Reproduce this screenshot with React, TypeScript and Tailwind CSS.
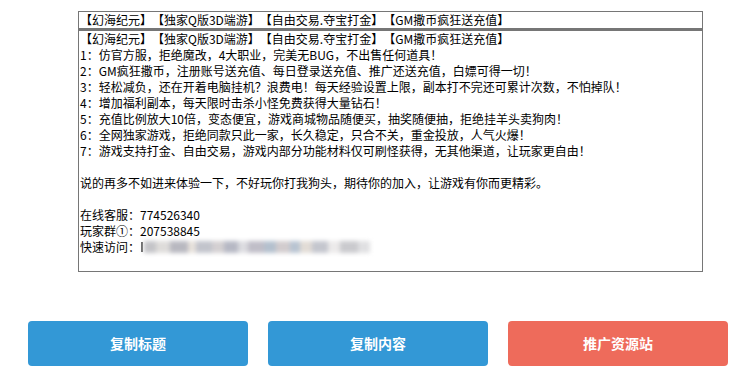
import React from 'react';

const lines = [
  '【幻海纪元】【独家Q版3D端游】【自由交易.夺宝打金】【GM撒币疯狂送充值】',
  '1：仿官方服，拒绝魔改，4大职业，完美无BUG，不出售任何道具！',
  '2：GM疯狂撒币，注册账号送充值、每日登录送充值、推广还送充值，白嫖可得一切！',
  '3：轻松减负，还在开着电脑挂机？浪费电！每天经验设置上限，副本打不完还可累计次数，不怕掉队！',
  '4：增加福利副本，每天限时击杀小怪免费获得大量钻石！',
  '5：充值比例放大10倍，变态便宜，游戏商城物品随便买，抽奖随便抽，拒绝挂羊头卖狗肉！',
  '6：全网独家游戏，拒绝同款只此一家，长久稳定，只合不关，重金投放，人气火爆！',
  '7：游戏支持打金、自由交易，游戏内部分功能材料仅可刷怪获得，无其他渠道，让玩家更自由！',
  '',
  '说的再多不如进来体验一下，不好玩你打我狗头，期待你的加入，让游戏有你而更精彩。',
  '',
  '在线客服：774526340',
  '玩家群①：207538845',
];

// blurred link pieces
const blurBits: { w: number; c: string }[] = [
  { w: 12, c: 'bg-[#c4c4c8]' },
  { w: 14, c: 'bg-[#dedcda]' },
  { w: 18, c: 'bg-[#b8b8c0]' },
  { w: 8, c: 'bg-[#e8e2dc]' },
  { w: 16, c: 'bg-[#c2c4cc]' },
  { w: 12, c: 'bg-[#d4d0d2]' },
  { w: 14, c: 'bg-[#b6b8c4]' },
  { w: 10, c: 'bg-[#dcdce0]' },
  { w: 16, c: 'bg-[#c0bec8]' },
  { w: 12, c: 'bg-[#b4c0ce]' },
  { w: 14, c: 'bg-[#d2ccce]' },
  { w: 10, c: 'bg-[#b8c4d2]' },
  { w: 12, c: 'bg-[#e2dcd6]' },
  { w: 16, c: 'bg-[#c4c6ce]' },
  { w: 12, c: 'bg-[#eceaea]' },
  { w: 18, c: 'bg-[#cacace]' },
  { w: 12, c: 'bg-[#e0e0e2]' },
];

export default function App() {
  return (
    <div
      className="w-[746px] h-[392px] bg-white text-black pt-[11px] [text-spacing-trim:space-all]"
      style={{ fontFamily: '"Noto Sans CJK SC", "Noto Sans", sans-serif' }}
    >
      <div className="ml-[78px] w-[625px]">
        <div className="h-[18px] border border-[#767676] text-[12px] leading-[16px] pl-[1px] whitespace-nowrap overflow-hidden">
          【幻海纪元】【独家Q版3D端游】【自由交易.夺宝打金】【GM撒币疯狂送充值】
        </div>
        <div className="h-[243px] border border-[#767676] border-t-[2px] text-[12px] leading-[16px] pl-[1px] pt-0">
          {lines.map((l, i) => (
            <div key={i} className="h-[16px] whitespace-nowrap">
              {l}
            </div>
          ))}
          <div className="h-[16px] whitespace-nowrap flex items-center">
            <span>快速访问：</span>
            <span className="inline-block w-[2px] h-[10px] bg-[#666] ml-[1px]" />
            <span className="flex items-center h-[14px] ml-[1px] blur-[2px]">
              {blurBits.map((b, i) => (
                <span key={i} className={`inline-block h-[12px] ${b.c}`} style={{ width: b.w }} />
              ))}
            </span>
          </div>
        </div>
      </div>

      <div className="flex gap-5 ml-[28px] mt-[49px]">
        <button className="w-[220px] h-[45px] rounded-[4px] bg-[#3398d6] text-white font-bold text-[14px]">
          复制标题
        </button>
        <button className="w-[220px] h-[45px] rounded-[4px] bg-[#3398d6] text-white font-bold text-[14px]">
          复制内容
        </button>
        <button className="w-[220px] h-[45px] rounded-[4px] bg-[#ee6b5b] text-white font-bold text-[14px]">
          推广资源站
        </button>
      </div>
    </div>
  );
}
